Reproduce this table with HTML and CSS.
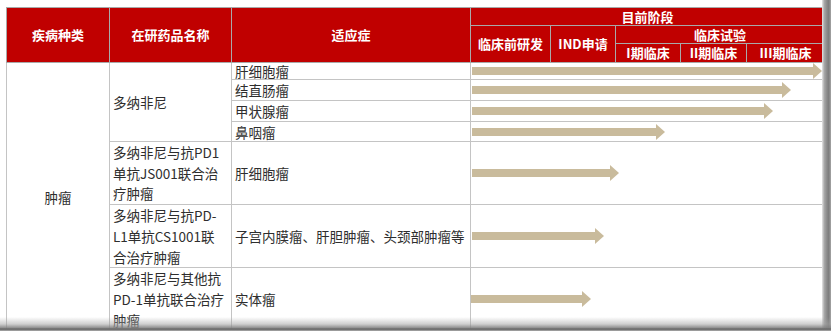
FILE: index.html
```html
<!DOCTYPE html>
<html lang="zh-CN">
<head>
<meta charset="utf-8">
<title>在研药品</title>
<link rel="stylesheet" href="styles.css">
</head>
<body>
<div class="page">
  <table class="pipeline">
    <colgroup>
      <col class="c-disease"><col class="c-drug"><col class="c-ind">
      <col class="c-pre"><col class="c-indapp"><col class="c-p1"><col class="c-p2"><col class="c-p3">
    </colgroup>
    <thead>
      <tr class="h1">
        <th rowspan="3">疾病种类</th>
        <th rowspan="3">在研药品名称</th>
        <th rowspan="3">适应症</th>
        <th colspan="5">目前阶段</th>
      </tr>
      <tr class="h2">
        <th rowspan="2">临床前研发</th>
        <th rowspan="2">IND申请</th>
        <th colspan="3">临床试验</th>
      </tr>
      <tr class="h3">
        <th>I期临床</th>
        <th>II期临床</th>
        <th>III期临床</th>
      </tr>
    </thead>
    <tbody>
      <tr class="r1">
        <td rowspan="7" class="center">肿瘤</td>
        <td rowspan="4">多纳非尼</td>
        <td>肝细胞瘤</td>
        <td colspan="5" class="stage"><div class="arrow" style="width:341px"></div></td>
      </tr>
      <tr class="r2">
        <td>结直肠瘤</td>
        <td colspan="5" class="stage"><div class="arrow" style="width:310px"></div></td>
      </tr>
      <tr class="r3">
        <td>甲状腺瘤</td>
        <td colspan="5" class="stage"><div class="arrow" style="width:292px"></div></td>
      </tr>
      <tr class="r4">
        <td>鼻咽瘤</td>
        <td colspan="5" class="stage"><div class="arrow" style="width:184px"></div></td>
      </tr>
      <tr class="r5">
        <td class="multi">多纳非尼与抗PD1<br>单抗JS001联合治<br>疗肿瘤</td>
        <td>肝细胞瘤</td>
        <td colspan="5" class="stage"><div class="arrow" style="width:138px"></div></td>
      </tr>
      <tr class="r6">
        <td class="multi">多纳非尼与抗PD-<br>L1单抗CS1001联<br>合治疗肿瘤</td>
        <td>子宫内膜瘤、肝胆肿瘤、头颈部肿瘤等</td>
        <td colspan="5" class="stage"><div class="arrow" style="width:123px"></div></td>
      </tr>
      <tr class="r7">
        <td class="multi">多纳非尼与其他抗<br>PD-1单抗联合治疗<br>肿瘤</td>
        <td>实体瘤</td>
        <td colspan="5" class="stage flush"><div class="arrow" style="width:111px"></div></td>
      </tr>
    </tbody>
  </table>
  <div class="shade-right"></div>
  <div class="shade-bottom"></div>
</div>
</body>
</html>
```

FILE: styles.css
```css
html, body {
  margin: 0;
  padding: 0;
  background: #ffffff;
  overflow: hidden;
}

.page {
  position: relative;
  width: 831px;
  height: 331px;
  overflow: hidden;
  box-sizing: border-box;
  padding: 7px 0 0 6px;
  font-family: "Noto Sans CJK SC", "Microsoft YaHei", sans-serif;
  font-size: 13px;
  color: #2e2e2e;
}

.pipeline {
  border-collapse: collapse;
  table-layout: fixed;
  width: 818px;
}

.c-disease { width: 103px; }
.c-drug { width: 122px; }
.c-ind { width: 239px; }
.c-pre { width: 80px; }
.c-indapp { width: 65px; }
.c-p1 { width: 65px; }
.c-p2 { width: 66px; }
.c-p3 { width: 78px; }

.pipeline th {
  background: #c00000;
  color: #ffffff;
  font-weight: bold;
  font-size: 13px;
  line-height: 16px;
  padding: 0;
  border: 1px solid #a9a9a9;
  text-align: center;
  vertical-align: middle;
  white-space: nowrap;
}

.h1 th { height: 17px; }
.h2 th { height: 17px; }
.h3 th { height: 18px; }

.pipeline td {
  border: 1px solid #c4c4c4;
  padding: 0 3px;
  font-size: 13.5px;
  line-height: 16px;
  vertical-align: middle;
  white-space: nowrap;
  text-align: left;
}

.pipeline td.center { text-align: center; }
.pipeline td.multi { line-height: 20.7px; }

.r1 td { height: 16px; }
.r2 td { height: 20px; }
.r3 td { height: 20px; }
.r4 td { height: 19px; }
.r5 td { height: 61px; }
.r6 td { height: 62px; }
.r7 td { height: 62px; }

.pipeline td.stage { padding: 0 0 0 1px; }
.pipeline td.stage.flush { padding-left: 0; }

.arrow {
  position: relative;
  height: 8px;
  background: #c9bb9c;
  margin-right: 9px;
  box-sizing: border-box;
}

.arrow::after {
  content: "";
  position: absolute;
  left: 100%;
  top: -4px;
  border-left: 9px solid #c9bb9c;
  border-top: 8px solid transparent;
  border-bottom: 8px solid transparent;
}

.shade-right {
  position: absolute;
  top: 0;
  right: 0;
  width: 9px;
  height: 100%;
  background: linear-gradient(to right, #e6e6e6 0%, #a8a8a8 25%, #8a8a8a 55%, #7c7c7c 75%, #a6a6a6 100%);
}

.shade-bottom {
  position: absolute;
  left: 0;
  bottom: 0;
  width: 100%;
  height: 14px;
  background: linear-gradient(to bottom, rgba(160,160,160,0) 0%, rgba(160,160,160,0.5) 50%, rgba(130,130,130,0.9) 78%, #6a6a6a 84%, #6a6a6a 88%, #b0b0b0 100%);
}
```
